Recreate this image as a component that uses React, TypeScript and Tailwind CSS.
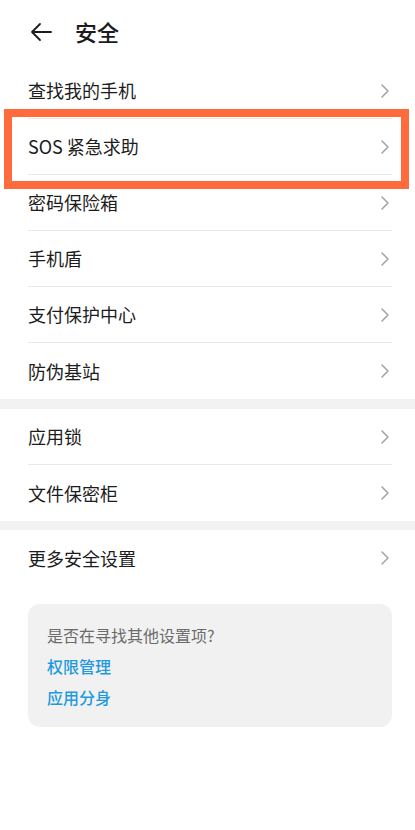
import React from "react";

const font = { fontFamily: '"Noto Sans CJK SC", "Noto Sans", sans-serif' };

function Chevron() {
  return (
    <svg width="10" height="16" viewBox="0 0 10 16" className="shrink-0">
      <path d="M2 2 L8 8 L2 14" fill="none" stroke="#a3a3a3" strokeWidth="1.5" strokeLinecap="round" strokeLinejoin="round" />
    </svg>
  );
}

function Row({ label, last }: { label: string; last?: boolean }) {
  return (
    <div className="pl-[28px] pr-[23px]">
      <div
        className={
          "flex h-[56px] items-center justify-between pr-[2px] " +
          (last ? "" : "border-b border-[#e9e9e9]")
        }
      >
        <span className="text-[18px] text-[#1c1c1c]">{label}</span>
        <Chevron />
      </div>
    </div>
  );
}

export default function App() {
  return (
    <div className="relative min-h-[830px] w-[415px] bg-white" style={font}>
      <header className="flex h-[63px] items-center pl-[29px]">
        <svg width="24" height="20" viewBox="0 0 24 20">
          <path d="M22 10 H3 M11 2 L3 10 L11 18" fill="none" stroke="#1c1c1c" strokeWidth="1.8" strokeLinecap="round" strokeLinejoin="round" />
        </svg>
        <h1 className="ml-[22px] text-[22px] font-medium text-[#1c1c1c]">安全</h1>
      </header>

      <section>
        <Row label="查找我的手机" />
        <Row label="SOS 紧急求助" />
        <Row label="密码保险箱" />
        <Row label="手机盾" />
        <Row label="支付保护中心" />
        <Row label="防伪基站" last />
      </section>

      <div className="h-[10px] bg-[#f2f2f2]" />

      <section>
        <Row label="应用锁" />
        <Row label="文件保密柜" last />
      </section>

      <div className="h-[9px] bg-[#f2f2f2]" />

      <section>
        <Row label="更多安全设置" last />
      </section>

      <div className="ml-[28px] mr-[23px] mt-[18px] flex flex-col gap-[15px] rounded-[12px] bg-[#f1f1f1] px-[19px] pt-[23px] pb-[22px] text-[16px] leading-[16px]">
        <span className="text-[#6b6b6b]">是否在寻找其他设置项?</span>
        <span className="font-medium text-[#1f9ae0]">权限管理</span>
        <span className="font-medium text-[#1f9ae0]">应用分身</span>
      </div>

      <div className="pointer-events-none absolute left-[4px] top-[109px] h-[80px] w-[405px] border-[8px] border-[#ff6b3d]" />
    </div>
  );
}
